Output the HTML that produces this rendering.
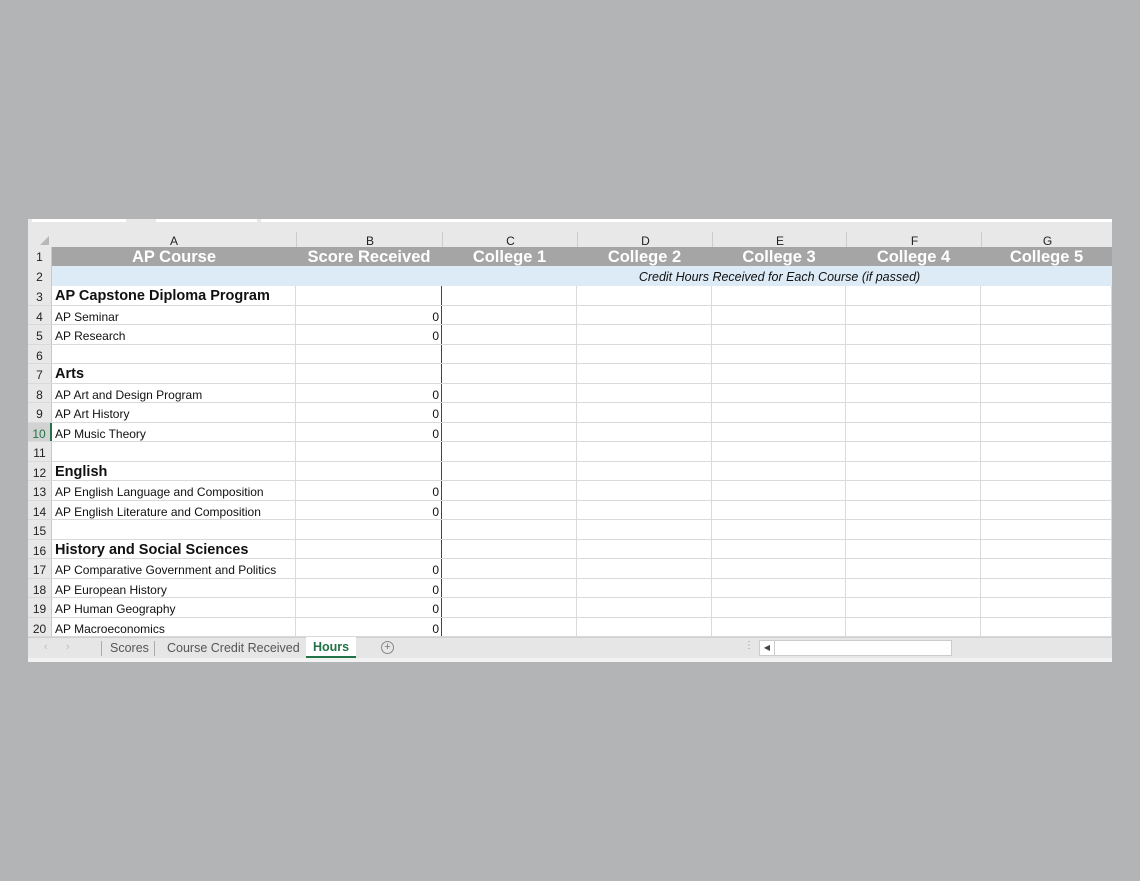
<!DOCTYPE html>
<html><head><meta charset="utf-8"><style>
body{margin:0;width:1140px;height:881px;background:#b3b4b6;position:relative;overflow:hidden;font-family:"Liberation Sans",Arial,sans-serif}
.a{position:absolute}
#sh{left:28px;top:219px;width:1084px;height:443px;background:#e8e8e8}
.cl{position:absolute;top:13px;height:15px;font-size:12px;color:#222;text-align:center;line-height:19px}
.row{position:absolute;left:0;width:1084px;height:19.5px;border-bottom:1px solid #dadada;box-sizing:border-box;background:#fff}
.rn{position:absolute;left:0;width:24px;height:100%;background:#e8e8e8;font-size:12px;text-align:center;line-height:22px;color:#222;border-right:1px solid #c8c8c8;box-sizing:border-box}
.c{position:absolute;top:0;height:100%;border-right:1px solid #dadada;box-sizing:border-box;font-size:12px;line-height:22px;color:#111;white-space:nowrap}
.h{font-weight:bold;font-size:14.5px;line-height:20px}
.t{position:absolute;top:0;text-align:center;color:#fff;font-weight:bold;font-size:16.5px;line-height:21px}
</style></head><body>
<div id="sh" class="a">
 <div class="a" style="left:4px;top:0;width:94px;height:3px;background:#fff"></div>
 <div class="a" style="left:128px;top:0;width:101px;height:3px;background:#fff"></div>
 <div class="a" style="left:233px;top:0;width:851px;height:3px;background:#fff"></div>
 <div class="a" style="left:0;top:13px;width:24px;height:15px"><div style="position:absolute;right:3px;bottom:2px;width:0;height:0;border-left:9px solid transparent;border-bottom:9px solid #b8b8b8"></div></div>
 <div class="cl" style="left:24px;width:244px">A</div>
 <div class="cl" style="left:268px;width:146px;border-left:1px solid #ccc">B</div>
 <div class="cl" style="left:414px;width:135px;border-left:1px solid #ccc">C</div>
 <div class="cl" style="left:549px;width:135px;border-left:1px solid #ccc">D</div>
 <div class="cl" style="left:684px;width:134px;border-left:1px solid #ccc">E</div>
 <div class="cl" style="left:818px;width:135px;border-left:1px solid #ccc">F</div>
 <div class="cl" style="left:953px;width:131px;border-left:1px solid #ccc">G</div>
 <div class="a" style="left:0;top:28px;width:1084px;height:19px;background:#a5a5a5">
  <div class="rn" style="line-height:21px">1</div>
  <div class="t" style="left:24px;width:244px">AP Course</div>
  <div class="t" style="left:268px;width:146px">Score Received</div>
  <div class="t" style="left:414px;width:135px">College 1</div>
  <div class="t" style="left:549px;width:135px">College 2</div>
  <div class="t" style="left:684px;width:134px">College 3</div>
  <div class="t" style="left:818px;width:135px">College 4</div>
  <div class="t" style="left:953px;width:131px">College 5</div>
 </div>
 <div class="a" style="left:0;top:47px;width:1084px;height:20px;background:#ddebf7">
  <div class="rn" style="line-height:22px">2</div>
  <div class="c" style="left:549px;width:405px;text-align:center;font-style:italic;border:0;line-height:22px;font-size:12.5px">Credit Hours Received for Each Course (if passed)</div>
 </div>
 <div id="rows"></div>
 <div class="a" style="left:0;top:418px;width:1084px;height:21px;background:#e6e6e6;border-top:1px solid #cfcfcf;font-size:12.5px;color:#555">
  <span class="a" style="left:16px;top:3px;color:#bbb;font-size:11px">‹</span>
  <span class="a" style="left:38px;top:3px;color:#bbb;font-size:11px">›</span>
  <div class="a" style="left:73px;top:3px;height:15px;border-left:1px solid #aaa"></div>
  <span class="a" style="left:82px;top:3px">Scores</span>
  <div class="a" style="left:126px;top:3px;height:15px;border-left:1px solid #aaa"></div>
  <span class="a" style="left:139px;top:3px">Course Credit Received</span>
  <div class="a" style="left:278px;top:-1px;width:50px;height:19px;background:#fff;border-bottom:2px solid #217346;color:#217346;font-weight:bold;text-align:center;line-height:21px">Hours</div>
  <div class="a" style="left:353px;top:3px;width:11px;height:11px;border:1px solid #888;border-radius:50%;font-size:11px;line-height:11px;text-align:center;color:#777">+</div>
  <span class="a" style="left:716px;top:2px;color:#999;font-size:10px">⋮</span>
  <div class="a" style="left:731px;top:2px;width:14px;height:14px;background:#fff;border:1px solid #ccc;font-size:8px;line-height:14px;text-align:center;color:#444">◀</div>
  <div class="a" style="left:746px;top:2px;width:176px;height:14px;background:#fff;border:1px solid #ccc"></div>
 </div>
 <div class="a" style="left:0;top:439px;width:1084px;height:4px;background:#f2f2f2"></div>
</div>
<script>
var d=[["3","AP Capstone Diploma Program",1,""],["4","AP Seminar",0,"0"],["5","AP Research",0,"0"],["6","",0,""],["7","Arts",1,""],["8","AP Art and Design Program",0,"0"],["9","AP Art History",0,"0"],["10","AP Music Theory",0,"0"],["11","",0,""],["12","English",1,""],["13","AP English Language and Composition",0,"0"],["14","AP English Literature and Composition",0,"0"],["15","",0,""],["16","History and Social Sciences",1,""],["17","AP Comparative Government and Politics",0,"0"],["18","AP European History",0,"0"],["19","AP Human Geography",0,"0"],["20","AP Macroeconomics",0,"0"]];
var h="";var cols=[[414,135],[549,135],[684,134],[818,135],[953,131]];
d.forEach(function(r,i){var t=67+i*19.5;
h+='<div class="row" style="top:'+t+'px"><div class="rn"'+(r[0]=="10"?' style="background:#d2d2d2;color:#217346;border-right:2px solid #217346"':'')+'>'+r[0]+'</div>';
h+='<div class="c'+(r[2]?' h':'')+'" style="left:24px;width:244px;padding-left:3px">'+r[1]+'</div>';
h+='<div class="c" style="left:268px;width:146px;text-align:right;padding-right:2px;border-right:1px solid #444">'+r[3]+'</div>';
cols.forEach(function(c){h+='<div class="c" style="left:'+c[0]+'px;width:'+c[1]+'px"></div>'});
h+='</div>'});
document.getElementById("rows").outerHTML=h;
</script>
</body></html>
